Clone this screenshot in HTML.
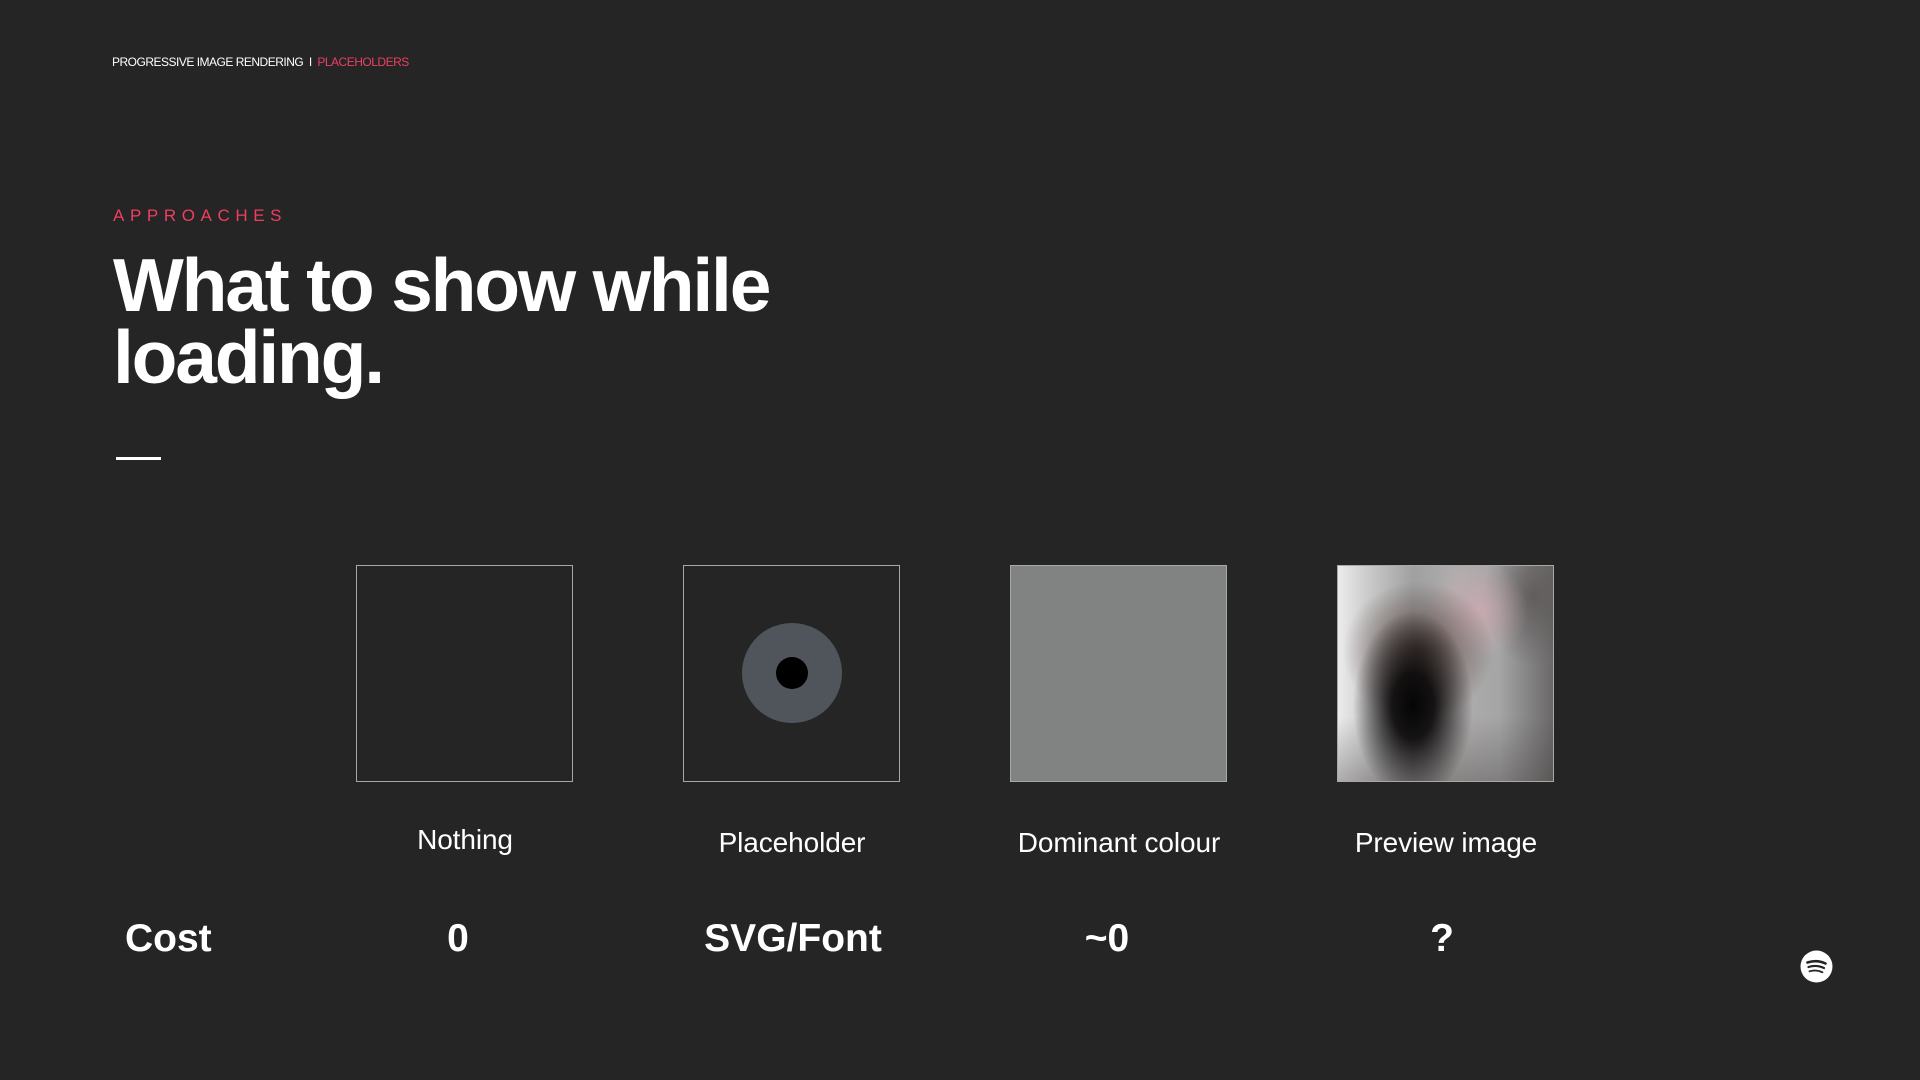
<!DOCTYPE html>
<html><head><meta charset="utf-8"><style>
*{margin:0;padding:0;box-sizing:border-box}
html,body{width:1920px;height:1080px;background:#252525;overflow:hidden}
body{position:relative;font-family:"Liberation Sans",Helvetica,Arial,sans-serif;color:#fff}
.a{position:absolute;white-space:nowrap}
.hdr{left:112px;top:55px;font-size:12px;letter-spacing:-0.5px;color:#fff}
.hdr span{color:#ee3e62}
.sub{left:113px;top:206px;font-size:17px;letter-spacing:5.6px;color:#ee3e62}
.title{left:113px;top:249px;font-size:75px;font-weight:bold;line-height:72px;letter-spacing:-2.2px}
.dash{left:116px;top:457px;width:45px;height:3px;background:#fff}
.box{position:absolute;top:565px;width:217px;height:217px;border:1.5px solid #a8a8a8}
.lbl{position:absolute;top:827px;width:300px;text-align:center;font-size:28px;color:#fff;letter-spacing:-0.1px}
.cost{position:absolute;top:917px;font-size:39px;font-weight:bold}
.cc{width:300px;text-align:center}
</style></head><body>
<div class="a hdr">PROGRESSIVE IMAGE RENDERING &nbsp;I&nbsp; <span>PLACEHOLDERS</span></div>
<div class="a sub">APPROACHES</div>
<div class="a title">What to show while<br>loading.</div>
<div class="a dash"></div>

<div class="box" style="left:356px"></div>
<div class="box" style="left:683px">
  <div style="position:absolute;left:58px;top:57px;width:100px;height:100px;border-radius:50%;background:#50555c"></div>
  <div style="position:absolute;left:92px;top:91px;width:32px;height:32px;border-radius:50%;background:#000"></div>
</div>
<div class="box" style="left:1010px;background:#818382"></div>
<div class="box" style="left:1337px;overflow:hidden;background:
radial-gradient(ellipse 60px 95px at 75px 140px,#050505 0%,rgba(10,8,8,.92) 35%,rgba(40,35,35,0) 100%),
radial-gradient(ellipse 75px 70px at 80px 85px,rgba(70,50,45,.8),rgba(70,50,45,0) 100%),
radial-gradient(ellipse 50px 50px at 140px 45px,rgba(205,170,178,.8),rgba(205,170,178,0) 100%),
radial-gradient(ellipse 50px 70px at 195px 30px,rgba(90,85,85,.8),rgba(90,85,85,0) 100%),
linear-gradient(180deg,rgba(0,0,0,0) 70%,rgba(60,55,55,.35) 100%),
linear-gradient(90deg,#ececec 0%,#c8c8c8 15%,#a0a0a0 35%,#b0adad 55%,#a5a5a5 75%,#6a6868 100%)"></div>

<div class="lbl" style="left:315px;top:824px">Nothing</div>
<div class="lbl" style="left:642px">Placeholder</div>
<div class="lbl" style="left:969px">Dominant colour</div>
<div class="lbl" style="left:1296px">Preview image</div>

<div class="cost" style="left:125px">Cost</div>
<div class="cost cc" style="left:308px">0</div>
<div class="cost cc" style="left:643px">SVG/Font</div>
<div class="cost cc" style="left:957px">~0</div>
<div class="cost cc" style="left:1292px">?</div>

<svg class="a" style="left:1800px;top:950px" width="33" height="33" viewBox="0 0 33 33">
<circle cx="16.5" cy="16.5" r="16" fill="#fff"/>
<path d="M7.5 12.5 Q17 9.5 25.5 13.5" stroke="#252525" stroke-width="2.6" fill="none" stroke-linecap="round"/>
<path d="M8.5 17 Q16.5 14.5 24 18" stroke="#252525" stroke-width="2.2" fill="none" stroke-linecap="round"/>
<path d="M9.5 21.3 Q16 19.3 22.5 22.3" stroke="#252525" stroke-width="1.8" fill="none" stroke-linecap="round"/>
</svg>
</body></html>
